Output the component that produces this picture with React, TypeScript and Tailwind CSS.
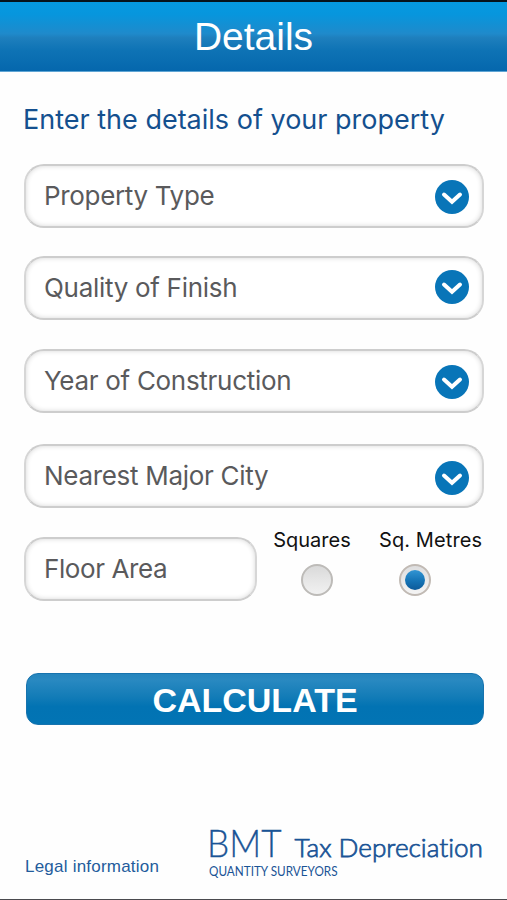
import React from "react";

function Chevron() {
  return (
    <svg width="34" height="34" viewBox="0 0 34 34" className="shrink-0">
      <circle cx="17" cy="17" r="17" fill="#0875b8" />
      <path d="M9 14.6 L17 21.8 L25 14.6" fill="none" stroke="#fff" strokeWidth="4" strokeLinecap="round" strokeLinejoin="miter" />
    </svg>
  );
}

const fieldBox =
  "flex h-16 items-center rounded-[20px] border-2 border-x-[#d6d6d6] border-y-[#cdcdcd] bg-white pl-[18px] shadow-[inset_0_0_5px_rgba(0,0,0,0.16)]";
const fieldText = "whitespace-nowrap text-[26px] leading-8 text-[#5a5a5c]";

function SelectField({ label, gap, spacing, drop }: { label: string; gap: string; spacing: string; drop: string }) {
  return (
    <button className={`${fieldBox} ${gap} w-[460px] justify-between pr-[13px] text-left`}>
      <span className={`${fieldText} ${spacing}`}>{label}</span>
      <span className={drop}>
        <Chevron />
      </span>
    </button>
  );
}

export default function App() {
  return (
    <div className="flex h-[900px] w-[507px] flex-col overflow-hidden border-t-2 border-b border-t-[#06131c] border-b-[#4a4a4e] bg-[#fefefe] font-['Inter','Liberation_Sans',sans-serif]">
      <header className="flex h-[70px] shrink-0 items-center justify-center border-b border-[#5fa5d4] bg-[linear-gradient(to_bottom,#0599e0_0%,#0796dd_18%,#1f8acb_46%,#1e7fbd_52%,#0e73b5_70%,#0567ad_100%)]">
        <h1 className="font-['Liberation_Sans',sans-serif] text-[39px] leading-[44px] text-white">Details</h1>
      </header>
      <main className="flex flex-col pl-6">
        <h2 className="mt-[30px] -ml-px h-9 whitespace-nowrap text-[27px] leading-9 text-[#14508f]">
          Enter the details of your property
        </h2>
        <SelectField label="Property Type" gap="mt-[26px]" spacing="tracking-[-0.33px]" drop="pt-[2px]" />
        <SelectField label="Quality of Finish" gap="mt-7" spacing="tracking-[-0.3px] pb-px" drop="pb-[2px]" />
        <SelectField label="Year of Construction" gap="mt-[29px]" spacing="tracking-[-0.3px]" drop="pt-[2px]" />
        <SelectField label="Nearest Major City" gap="mt-[31px]" spacing="tracking-[-0.3px]" drop="pt-1" />
        <div className="mt-[21px] flex h-[72px]">
          <div className={`${fieldBox} mt-2 w-[233px]`}>
            <span className={`${fieldText} tracking-[-0.4px]`}>Floor Area</span>
          </div>
          <label className="-mt-px ml-4 flex w-[78px] flex-col items-center">
            <span className="whitespace-nowrap text-[20px] leading-6 text-[#111]">Squares</span>
            <span className="mt-3 ml-[10px] size-8 rounded-full border-2 border-[#bdbbb8] bg-[linear-gradient(#d9d9d9,#e6e6e6_50%,#f1f1f1)]" />
          </label>
          <label className="-mt-px ml-7 flex w-[104px] flex-col">
            <span className="whitespace-nowrap text-[20px] leading-6 tracking-[0.1px] text-[#111]">Sq. Metres</span>
            <span className="mt-3 ml-5 flex size-8 items-center justify-center rounded-full border-2 border-[#c1bab4] bg-[linear-gradient(#dededf,#f4f4f4)]">
              <span className="size-5 rounded-full bg-[linear-gradient(#3295d3,#1473b5_55%,#0c5a99)]" />
            </span>
          </label>
        </div>
        <button className="mt-[72px] ml-[2px] flex h-[52px] w-[458px] items-center justify-center rounded-[12px] border border-[#1773ae] bg-[linear-gradient(to_bottom,#2585bd_0%,#2989c1_12%,#137cb7_45%,#0273b3_65%,#0274b4_100%)] font-['Liberation_Sans',sans-serif] text-[34px] leading-10 font-bold text-white">
          <span className="pt-[2px]">CALCULATE</span>
        </button>
      </main>
      <footer className="mt-auto flex h-20 items-end justify-between pr-[23px] pl-[25px]">
        <a className="mb-[22px] whitespace-nowrap font-['Liberation_Sans',sans-serif] text-[17px] leading-5 tracking-[0.22px] text-[#235c9c]">Legal information</a>
        <svg width="276" height="72" viewBox="0 0 276 72" className="mb-[11px] shrink-0 overflow-visible font-['Lato','Inter',sans-serif] [font-variant-ligatures:none]" fill="#1a5496" stroke="#1a5496">
          <text x="-1" y="40.5" fontSize="38" fontWeight="300" strokeWidth="0.3" textLength="74.5" lengthAdjust="spacingAndGlyphs">BMT</text>
          <text x="86.5" y="40.5" fontSize="26" fontWeight="300" strokeWidth="0.75" textLength="188.5" lengthAdjust="spacingAndGlyphs">Tax Depreciation</text>
          <text x="1" y="59.5" fontSize="14" fontWeight="400" strokeWidth="0" textLength="128.5" lengthAdjust="spacingAndGlyphs">QUANTITY SURVEYORS</text>
        </svg>
      </footer>
    </div>
  );
}
